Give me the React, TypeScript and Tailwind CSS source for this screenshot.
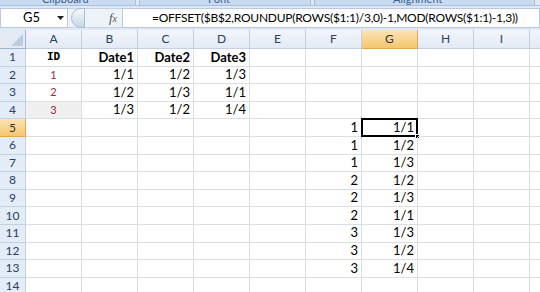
import React from "react";

const cols = ["A", "B", "C", "D", "E", "F", "G", "H", "I", ""];

type Cell = { t?: string; cls?: string };

const data: Record<number, Record<string, Cell>> = {
  1: {
    A: { t: "ID", cls: "justify-center font-bold font-['DejaVu_Sans_Mono'] text-[11px]" },
    B: { t: "Date1", cls: "justify-end font-bold" },
    C: { t: "Date2", cls: "justify-end font-bold" },
    D: { t: "Date3", cls: "justify-end font-bold" },
  },
  2: {
    A: { t: "1", cls: "justify-center text-[#a0283a] text-[11px]" },
    B: { t: "1/1", cls: "justify-end" },
    C: { t: "1/2", cls: "justify-end" },
    D: { t: "1/3", cls: "justify-end" },
  },
  3: {
    A: { t: "2", cls: "justify-center text-[#a0283a] text-[11px]" },
    B: { t: "1/2", cls: "justify-end" },
    C: { t: "1/3", cls: "justify-end" },
    D: { t: "1/1", cls: "justify-end" },
  },
  4: {
    A: { t: "3", cls: "justify-center text-[#a0283a] text-[11px] bg-[#f0f0f0]" },
    B: { t: "1/3", cls: "justify-end" },
    C: { t: "1/2", cls: "justify-end" },
    D: { t: "1/4", cls: "justify-end" },
  },
};

const fcol = ["1", "1", "1", "2", "2", "2", "3", "3", "3"];
const gcol = ["1/1", "1/2", "1/3", "1/2", "1/3", "1/1", "1/3", "1/2", "1/4"];
for (let i = 0; i < 9; i++) {
  const r = 5 + i;
  data[r] = data[r] || {};
  data[r].F = { t: fcol[i], cls: "justify-end" };
  data[r].G = { t: gcol[i], cls: "justify-end" };
}

export default function App() {
  const rows = Array.from({ length: 14 }, (_, i) => i + 1);
  return (
    <div className="w-[540px] h-[292px] overflow-hidden bg-white font-['Lato',sans-serif] text-[13px] text-black">
      {/* ribbon bottom strip */}
      <div className="h-[6px] bg-[#dfe9f5] flex overflow-hidden border-b border-[#a9c0dc]">
        <div className="w-[136px] relative border-r border-[#a9c0dc] bg-[#c9dbf0]">
          <span className="absolute left-[42px] top-[-7px] text-[11px] leading-[12px] text-[#3b5f8f]">Clipboard</span>
        </div>
        <div className="w-[3px]" />
        <div className="w-[172px] relative border-x border-[#a9c0dc] bg-[#c9dbf0]">
          <span className="absolute left-[68px] top-[-7px] text-[11px] leading-[12px] text-[#3b5f8f]">Font</span>
        </div>
        <div className="w-[3px]" />
        <div className="w-[221px] relative border-x border-[#a9c0dc] bg-[#c9dbf0]">
          <span className="absolute left-[78px] top-[-7px] text-[11px] leading-[12px] text-[#3b5f8f]">Alignment</span>
        </div>
      </div>
      {/* formula bar */}
      <div className="h-[22px] bg-[#dfe8f4] flex items-center pt-[1px]">
        <div className="h-[20px] w-[68px] bg-white border border-[#b7c9df] flex items-center justify-between pl-[22px] pr-[3px] text-[13px]">
          <span>G5</span>
          <svg width="7" height="4" viewBox="0 0 7 4"><path d="M0 0h7L3.5 4z" fill="#222" /></svg>
        </div>
        <div className="h-[20px] w-[54px] flex items-center bg-[#eef3f9] border-y border-[#c4d3e5] relative">
          <div className="w-[14px] h-[20px] rounded-l-full border border-[#a8bdd6] bg-gradient-to-b from-[#f7f9fc] to-[#c9d6e6] ml-[3px]" />
          <span className="ml-auto mr-[5px] font-['Liberation_Serif',serif] italic text-[13px] text-[#555]">f<span className="text-[10px]">x</span></span>
        </div>
        <div className="h-[20px] flex-1 bg-white border border-[#b7c9df] flex items-center pl-[29px] text-[12px] tracking-[-0.25px] whitespace-nowrap">
          =OFFSET($B$2,ROUNDUP(ROWS($1:1)/3,0)-1,MOD(ROWS($1:1)-1,3))
        </div>
      </div>
      <div className="h-[2px] bg-[#dfe8f4]" />
      {/* grid */}
      <div className="grid grid-cols-[26px_repeat(9,56px)_20px]">
        {/* corner */}
        <div className="h-[19px] bg-[#e4ebf5] border-r border-b border-[#9eb6ce] relative overflow-hidden">
          <svg className="absolute right-[2px] bottom-[2px]" width="12" height="12" viewBox="0 0 12 12"><path d="M12 0V12H0z" fill="#bccde2" /></svg>
        </div>
        {cols.map((c, i) => (
          <div
            key={i}
            className={`h-[19px] flex items-center justify-center text-[12px] border-r border-b ${c === "G" ? "bg-gradient-to-b from-[#fbe3b4] to-[#f5c66e] border-[#e2a84a] text-[#333]" : "bg-gradient-to-b from-[#f3f6fb] to-[#e2eaf5] border-[#c2d1e3] text-[#27415f]"}`}
          >
            {c}
          </div>
        ))}
        {rows.map((r) => (
          <React.Fragment key={r}>
            <div
              className={`h-[17.6px] flex items-center justify-center text-[12px] border-r border-b ${r === 5 ? "bg-gradient-to-b from-[#fbe3b4] to-[#f5c66e] border-[#e2a84a] text-[#333]" : "bg-[#e4ecf7] border-[#c2d1e3] text-[#27415f]"}`}
            >
              {r}
            </div>
            {cols.map((c, i) => {
              const cell = data[r]?.[c];
              const sel = r === 5 && c === "G";
              return (
                <div
                  key={i}
                  className={`h-[17.6px] flex items-center px-[3px] border-r border-b border-[#dadfe6] relative ${cell?.cls ?? ""}`}
                >
                  {cell?.t}
                  {sel && (
                    <>
                      <div className="absolute left-[-1px] top-[-1px] right-[-1px] bottom-[-1px] border-[2px] border-black" />
                      <div className="absolute right-[-3px] bottom-[-3px] w-[5px] h-[5px] bg-black border border-white" />
                    </>
                  )}
                </div>
              );
            })}
          </React.Fragment>
        ))}
      </div>
    </div>
  );
}
